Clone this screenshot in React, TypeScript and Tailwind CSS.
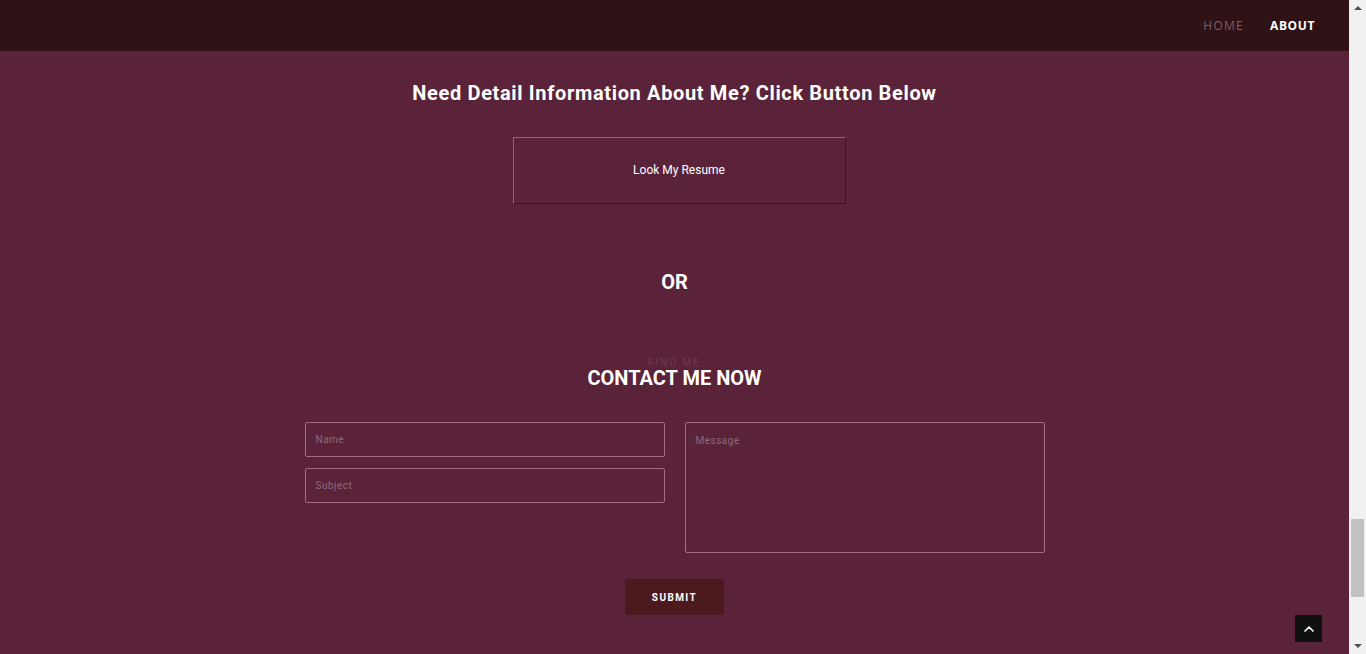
import { ChevronUp } from 'lucide-react';

function NavBar() {
  return (
    <header className="flex h-[51px] items-center justify-end bg-[#2e1215] pr-[34px]">
      <nav className="flex items-center gap-[26px] text-[12px] font-['Open_Sans',sans-serif]">
        <a className="tracking-[1.3px] text-[#7d5d69]" href="#home">
          HOME
        </a>
        <a className="font-bold tracking-[0.6px] text-white" href="#about">
          ABOUT
        </a>
      </nav>
    </header>
  );
}

function ContactForm() {
  const field =
    'shrink-0 rounded-[2px] border border-[#a26b83] bg-transparent px-[10px] text-[10px] tracking-[0.5px] text-white placeholder:text-[#8d6a7a] outline-none';

  return (
    <form className="mt-[32px] flex flex-col items-center">
      <div className="flex w-[740px] gap-[20px]">
        <div className="flex w-[360px] shrink-0 flex-col gap-[11px]">
          <input className={`${field} h-[35px] w-[360px]`} placeholder="Name" />
          <input className={`${field} h-[35px] w-[360px]`} placeholder="Subject" />
        </div>
        <textarea
          className={`${field} h-[131px] w-[360px] resize-none pt-[10px]`}
          placeholder="Message"
        />
      </div>
      <button
        className="mt-[26px] h-[36px] w-[99px] rounded-[2px] bg-[#4c1a1e] text-[10px] font-bold tracking-[1.4px] text-white"
        type="button"
      >
        SUBMIT
      </button>
    </form>
  );
}

function FakeScrollbar() {
  return (
    <div className="flex w-[17px] flex-col items-center justify-between bg-[#f1f1f1] py-[6px]">
      <span className="h-0 w-0 border-x-[4px] border-b-[4px] border-x-transparent border-b-[#505050]" />
      <div className="flex flex-1 flex-col justify-end pb-[47px] pt-[500px]">
        <div className="h-[78px] w-[13px] bg-[#c1c1c1]" />
      </div>
      <span className="h-0 w-0 border-x-[4px] border-t-[4px] border-x-transparent border-t-[#505050]" />
    </div>
  );
}

function App() {
  return (
    <div className="flex h-[654px] w-full overflow-hidden bg-[#5b2339] font-['Roboto',sans-serif]">
      <div className="relative flex flex-1 flex-col">
        <NavBar />
        <main className="flex flex-col items-center pt-[30px] text-white">
          <h2 className="text-[20px] font-bold leading-[24px] tracking-[0.65px]">
            Need Detail Information About Me? Click Button Below
          </h2>
          <div className="mt-[32px] flex w-full justify-center pl-[9px]">
            <button
              className="h-[67px] w-[333px] border border-t-[#8c6473] border-l-[#8c6473] border-b-[#3a1624] border-r-[#3a1624] pb-[1px] text-[12px] text-white"
              type="button"
            >
              Look My Resume
            </button>
          </div>
          <h3 className="mt-[66px] text-[20px] font-bold leading-[24px]">OR</h3>
          <p className="mt-[64px] text-[10px] leading-[10px] tracking-[2px] text-[#703a50]">
            FIND ME
          </p>
          <h3 className="mt-[-2px] text-[20px] font-bold leading-[24px]">
            CONTACT ME NOW
          </h3>
          <ContactForm />
        </main>
        <button
          className="absolute bottom-[12px] right-[27px] flex h-[27px] w-[27px] items-center justify-center bg-[#111011] text-white"
          type="button"
        >
          <ChevronUp size={16} strokeWidth={2.5} />
        </button>
      </div>
      <FakeScrollbar />
    </div>
  );
}

export default App;
